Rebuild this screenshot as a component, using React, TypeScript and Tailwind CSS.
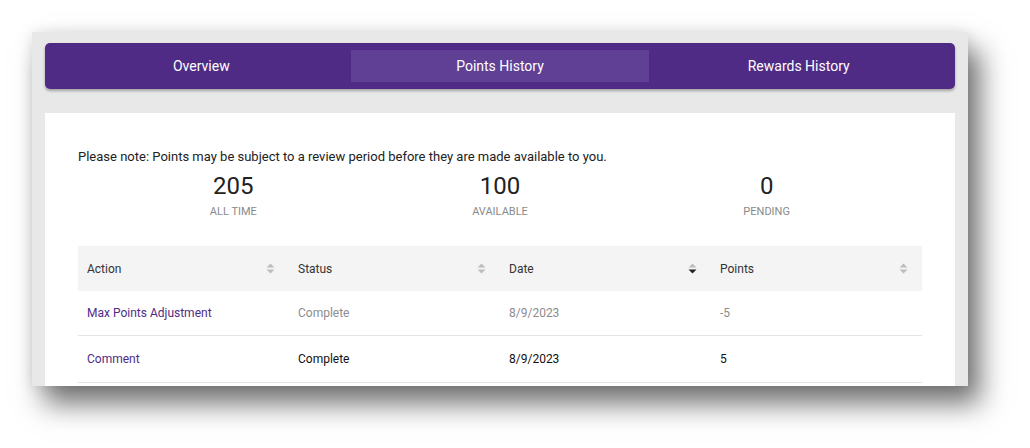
import React from 'react';

type SortState = 'none' | 'asc' | 'desc';

const SortIcon: React.FC<{ state: SortState }> = ({ state }) => {
  const up = state === 'asc' ? '#222' : '#bdbdbd';
  const down = state === 'desc' ? '#222' : '#bdbdbd';
  return (
    <svg width="9" height="11" viewBox="0 0 9 11" className="shrink-0">
      <path d="M4.5 0.5L8.5 4.5H0.5Z" fill={up} />
      <path d="M4.5 10.5L8.5 6.5H0.5Z" fill={down} />
    </svg>
  );
};

const tabs = ['Overview', 'Points History', 'Rewards History'];

const stats = [
  { value: '205', label: 'All Time' },
  { value: '100', label: 'Available' },
  { value: '0', label: 'Pending' },
];

const columns: { title: string; sort: SortState }[] = [
  { title: 'Action', sort: 'none' },
  { title: 'Status', sort: 'none' },
  { title: 'Date', sort: 'desc' },
  { title: 'Points', sort: 'none' },
];

const rows = [
  { action: 'Max Points Adjustment', status: 'Complete', date: '8/9/2023', points: '-5', muted: true },
  { action: 'Comment', status: 'Complete', date: '8/9/2023', points: '5', muted: false },
];

export default function App() {
  return (
    <div className="w-[1030px] h-[448px] bg-white pt-[32px] pl-[32px] overflow-hidden" style={{ fontFamily: 'Roboto, "Liberation Sans", sans-serif' }}>
      <div className="w-[936px] h-[354px] bg-[#e8e8e8] overflow-hidden shadow-[12px_18px_26px_rgba(0,0,0,0.55),0_0_14px_rgba(0,0,0,0.1)]">
        <div className="px-[13px] pt-[11px]">
          {/* Tabs */}
          <div className="h-[46px] rounded-[5px] bg-[#4f2b86] flex px-[7px] py-[7px] shadow-[0_2px_3px_rgba(0,0,0,0.3)]">
            {tabs.map((t, i) => (
              <div
                key={t}
                className={`flex-1 flex items-center justify-center text-[14px] text-white ${i === 1 ? 'bg-[#5f4095]' : ''}`}
              >
                {t}
              </div>
            ))}
          </div>

          {/* Card */}
          <div className="mt-[24px] bg-white px-[33px] pt-[34px] pb-[20px]">
            <p className="text-[13px] leading-[20px] text-[#222]">
              Please note: Points may be subject to a review period before they are made available to you.
            </p>

            <div className="mx-[22px] mt-[5px] grid grid-cols-3">
              {stats.map((s) => (
                <div key={s.label} className="flex flex-col items-center">
                  <div className="text-[24px] leading-[28px] text-[#222]">{s.value}</div>
                  <div className="mt-[4px] text-[11px] leading-[16px] uppercase text-[#8a8a8a]">{s.label}</div>
                </div>
              ))}
            </div>

            {/* Table */}
            <div className="mt-[26px]">
              <div className="grid grid-cols-4 h-[45px] bg-[#f4f4f4]">
                {columns.map((c) => (
                  <div key={c.title} className="flex items-center justify-between pl-[9px] pr-[14px] text-[12px] text-[#333]">
                    <span>{c.title}</span>
                    <SortIcon state={c.sort} />
                  </div>
                ))}
              </div>
              {rows.map((r, idx) => (
                <div
                  key={r.action}
                  className={`grid grid-cols-4 ${idx === 0 ? 'h-[45px]' : 'h-[47px]'} border-b border-[#e3e3e3] text-[12px]`}
                >
                  <div className="flex items-center pl-[9px] text-[#4f2b86]">{r.action}</div>
                  <div className={`flex items-center pl-[9px] ${r.muted ? 'text-[#8c8c8c]' : 'text-[#111]'}`}>{r.status}</div>
                  <div className={`flex items-center pl-[9px] ${r.muted ? 'text-[#8c8c8c]' : 'text-[#111]'}`}>{r.date}</div>
                  <div className={`flex items-center pl-[9px] ${r.muted ? 'text-[#8c8c8c]' : 'text-[#111]'}`}>{r.points}</div>
                </div>
              ))}
            </div>
          </div>
        </div>
      </div>
    </div>
  );
}
